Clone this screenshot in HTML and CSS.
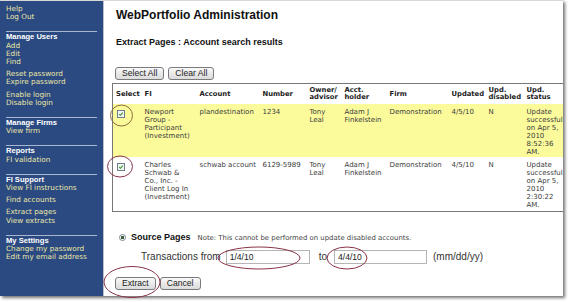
FILE: index.html
```html
<!DOCTYPE html>
<html lang="en">
<head>
  <meta charset="UTF-8">
  <title>WebPortfolio Administration</title>
  <link rel="stylesheet" href="styles.css">
</head>
<body>
  <div class="shot">
    <nav class="side">
      <div class="group">
        <a href="#">Help</a>
        <a href="#">Log Out</a>
      </div>
      <hr>
      <h3>Manage Users</h3>
      <div class="group">
        <a href="#">Add</a>
        <a href="#">Edit</a>
        <a href="#">Find</a>
      </div>
      <div class="group gap">
        <a href="#">Reset password</a>
        <a href="#">Expire password</a>
      </div>
      <div class="group gap">
        <a href="#">Enable login</a>
        <a href="#">Disable login</a>
      </div>
      <hr>
      <h3>Manage Firms</h3>
      <div class="group">
        <a href="#">View firm</a>
      </div>
      <hr>
      <h3>Reports</h3>
      <div class="group">
        <a href="#">FI validation</a>
      </div>
      <hr>
      <h3>FI Support</h3>
      <div class="group">
        <a href="#">View FI instructions</a>
      </div>
      <div class="group gap">
        <a href="#">Find accounts</a>
      </div>
      <div class="group gap">
        <a href="#">Extract pages</a>
        <a href="#">View extracts</a>
      </div>
      <hr>
      <h3>My Settings</h3>
      <div class="group">
        <a href="#">Change my password</a>
        <a href="#">Edit my email address</a>
      </div>
    </nav>

    <main class="main">
      <h1>WebPortfolio Administration</h1>
      <h2>Extract Pages : Account search results</h2>

      <div class="toolbar">
        <button class="btn">Select All</button>
        <button class="btn">Clear All</button>
      </div>

      <table class="results">
        <colgroup>
          <col style="width:30px">
          <col style="width:55px">
          <col style="width:63px">
          <col style="width:47px">
          <col style="width:35px">
          <col style="width:45px">
          <col style="width:62px">
          <col style="width:37px">
          <col style="width:38px">
          <col>
        </colgroup>
        <thead>
          <tr>
            <th>Select</th>
            <th>FI</th>
            <th>Account</th>
            <th>Number</th>
            <th>Owner/<br>advisor</th>
            <th>Acct.<br>holder</th>
            <th>Firm</th>
            <th>Updated</th>
            <th>Upd.<br>disabled</th>
            <th>Upd.<br>status</th>
          </tr>
        </thead>
        <tbody>
          <tr class="picked">
            <td><span class="check"><svg viewBox="0 0 8 8"><path d="M1.6 4.2 L3.3 5.8 L6.4 2.2" /></svg></span></td>
            <td>Newport<br>Group -<br>Participant<br>(Investment)</td>
            <td>plandestination</td>
            <td>1234</td>
            <td>Tony<br>Leal</td>
            <td>Adam J<br>Finkelstein</td>
            <td>Demonstration</td>
            <td>4/5/10</td>
            <td>N</td>
            <td>Update<br>successful<br>on Apr 5,<br>2010<br>8:52:36<br>AM.</td>
          </tr>
          <tr>
            <td><span class="check"><svg viewBox="0 0 8 8"><path d="M1.6 4.2 L3.3 5.8 L6.4 2.2" /></svg></span></td>
            <td>Charles<br>Schwab &amp;<br>Co., Inc. -<br>Client Log In<br>(Investment)</td>
            <td>schwab account</td>
            <td>6129-5989</td>
            <td>Tony<br>Leal</td>
            <td>Adam J<br>Finkelstein</td>
            <td>Demonstration</td>
            <td>4/5/10</td>
            <td>N</td>
            <td>Update<br>successful<br>on Apr 5,<br>2010<br>2:30:22<br>AM.</td>
          </tr>
        </tbody>
      </table>

      <div class="source">
        <span class="radio"></span>
        <strong>Source Pages</strong>
        <span class="note">Note: This cannot be performed on update disabled accounts.</span>
      </div>

      <div class="range">
        <label>Transactions from</label>
        <input type="text" class="from" value="1/4/10">
        <span class="to">to</span>
        <input type="text" class="until" value="4/4/10">
        <span>(mm/dd/yy)</span>
      </div>

      <div class="actions">
        <button class="btn">Extract</button>
        <button class="btn">Cancel</button>
      </div>
    </main>
  </div>

  <!-- hand-drawn annotation rings -->
  <svg class="marks" width="570" height="302" viewBox="0 0 570 302">
    <ellipse cx="121.5" cy="115.5" rx="11" ry="10.5" class="gold" />
    <ellipse cx="120" cy="166.5" rx="12.5" ry="10.5" />
    <ellipse cx="259" cy="258" rx="41" ry="11" />
    <ellipse cx="347" cy="258" rx="20" ry="11" />
    <ellipse cx="132" cy="282" rx="28" ry="15.5" />
  </svg>
</body>
</html>
```

FILE: styles.css
```css
body {
  margin: 0;
  background: #fff;
  position: relative;
  width: 570px;
  height: 302px;
  overflow: hidden;
}
.shot {
  display: flex;
  width: 563px;
  height: 296px;
  background: #fff;
  border-top: 1px solid #d8d8d8;
  box-sizing: border-box;
  box-shadow: 2px 2px 3px rgba(0, 0, 0, 0.55);
  overflow: hidden;
}

/* left menu */
.side {
  width: 104px;
  flex: none;
  background: #2c4a82;
  border-right: 1px solid #b9bfcc;
  box-sizing: border-box;
  padding: 4px 6px 0 6px;
  font-family: "DejaVu Sans", Verdana, sans-serif;
  font-size: 7.25px;
  line-height: 8.2px;
}
.side a {
  display: block;
  color: #ebe7a6;
  text-decoration: none;
  white-space: nowrap;
}
.side .gap {
  margin-top: 4px;
}
.side hr {
  border: none;
  border-top: 1px solid #a9b6d2;
  margin: 10px 0 1px 0;
}
.side h3 {
  margin: 0;
  color: #fff;
  font-family: "Liberation Sans", Arial, sans-serif;
  font-size: 7.6px;
  line-height: 8.2px;
  font-weight: bold;
}

/* content */
.main {
  flex: 1;
  padding: 0 0 0 8px;
  font-family: "Liberation Sans", Arial, sans-serif;
  color: #111;
  min-width: 0;
}
.main h1 {
  margin: 7px 0 0 4px;
  font-size: 12px;
  line-height: 15px;
}
.main h2 {
  margin: 14px 0 0 4px;
  font-size: 9px;
  line-height: 11px;
}
.toolbar {
  margin: 19px 0 0 3px;
  display: flex;
  gap: 4px;
}
.btn {
  font-family: "Liberation Sans", Arial, sans-serif;
  font-size: 8.6px;
  color: #222;
  height: 13px;
  padding: 0 6px;
  border: 1px solid #7a7a7a;
  border-radius: 3px;
  background: linear-gradient(#fafafa, #e9e9e9 50%, #dcdcdc);
  line-height: 11px;
}

.results {
  margin-top: 3px;
  width: 452px;
  table-layout: fixed;
  border-collapse: collapse;
  border: 1px solid #777;
  font-family: "DejaVu Sans", Verdana, sans-serif;
  font-size: 7px;
  line-height: 7.9px;
  color: #3c3c3c;
}
.results th {
  text-align: left;
  font-weight: bold;
  font-size: 6.8px;
  line-height: 7px;
  padding: 3px 0 3px 2px;
  height: 13px;
  vertical-align: middle;
  white-space: nowrap;
  color: #222;
}
.results th:first-child {
  padding-left: 3px;
}
.results td {
  vertical-align: top;
  padding: 5px 0 1px 2px;
  white-space: nowrap;
}
.results tr.picked td {
  background: #fbfb9c;
}
.check {
  display: block;
  width: 8px;
  height: 8px;
  margin: 1px 0 0 2px;
  border: 1px solid #6d7f8e;
  background: #f4f7f1;
  box-sizing: border-box;
}
.check svg {
  display: block;
  width: 6px;
  height: 6px;
}
.check path {
  fill: none;
  stroke: #2f8f2f;
  stroke-width: 1.4;
}

.source {
  margin: 20px 0 0 7px;
  display: flex;
  align-items: baseline;
  gap: 5px;
  font-size: 9px;
  line-height: 11px;
}
.radio {
  width: 7px;
  height: 7px;
  border: 1px solid #7a8590;
  border-radius: 50%;
  box-sizing: border-box;
  background: radial-gradient(circle, #3a5f3a 0 1.4px, #fff 1.8px);
  align-self: center;
}
.note {
  margin-left: 2px;
  font-family: "DejaVu Sans", Verdana, sans-serif;
  font-size: 6.9px;
  color: #444;
}

.range {
  margin: 6px 0 0 29px;
  display: flex;
  align-items: center;
  font-size: 10px;
  color: #333;
}
.range label {
  margin-right: 5px;
}
.range input {
  font-family: "Liberation Sans", Arial, sans-serif;
  font-size: 8.6px;
  height: 14px;
  padding: 0 3px;
  border: 1px solid #b5b5b5;
  box-sizing: border-box;
  color: #222;
}
.range .from {
  width: 84px;
}
.range .until {
  width: 93px;
  margin-right: 6px;
}
.range .to {
  margin: 0 7px 0 9px;
}

.actions {
  margin: 13px 0 0 3px;
  display: flex;
  gap: 4px;
}

/* annotation rings */
.marks {
  position: absolute;
  top: 0;
  left: 0;
  pointer-events: none;
}
.marks ellipse {
  fill: none;
  stroke: #8a3347;
  stroke-width: 1;
}
.marks ellipse.gold {
  stroke: #8c6a3c;
}
```
